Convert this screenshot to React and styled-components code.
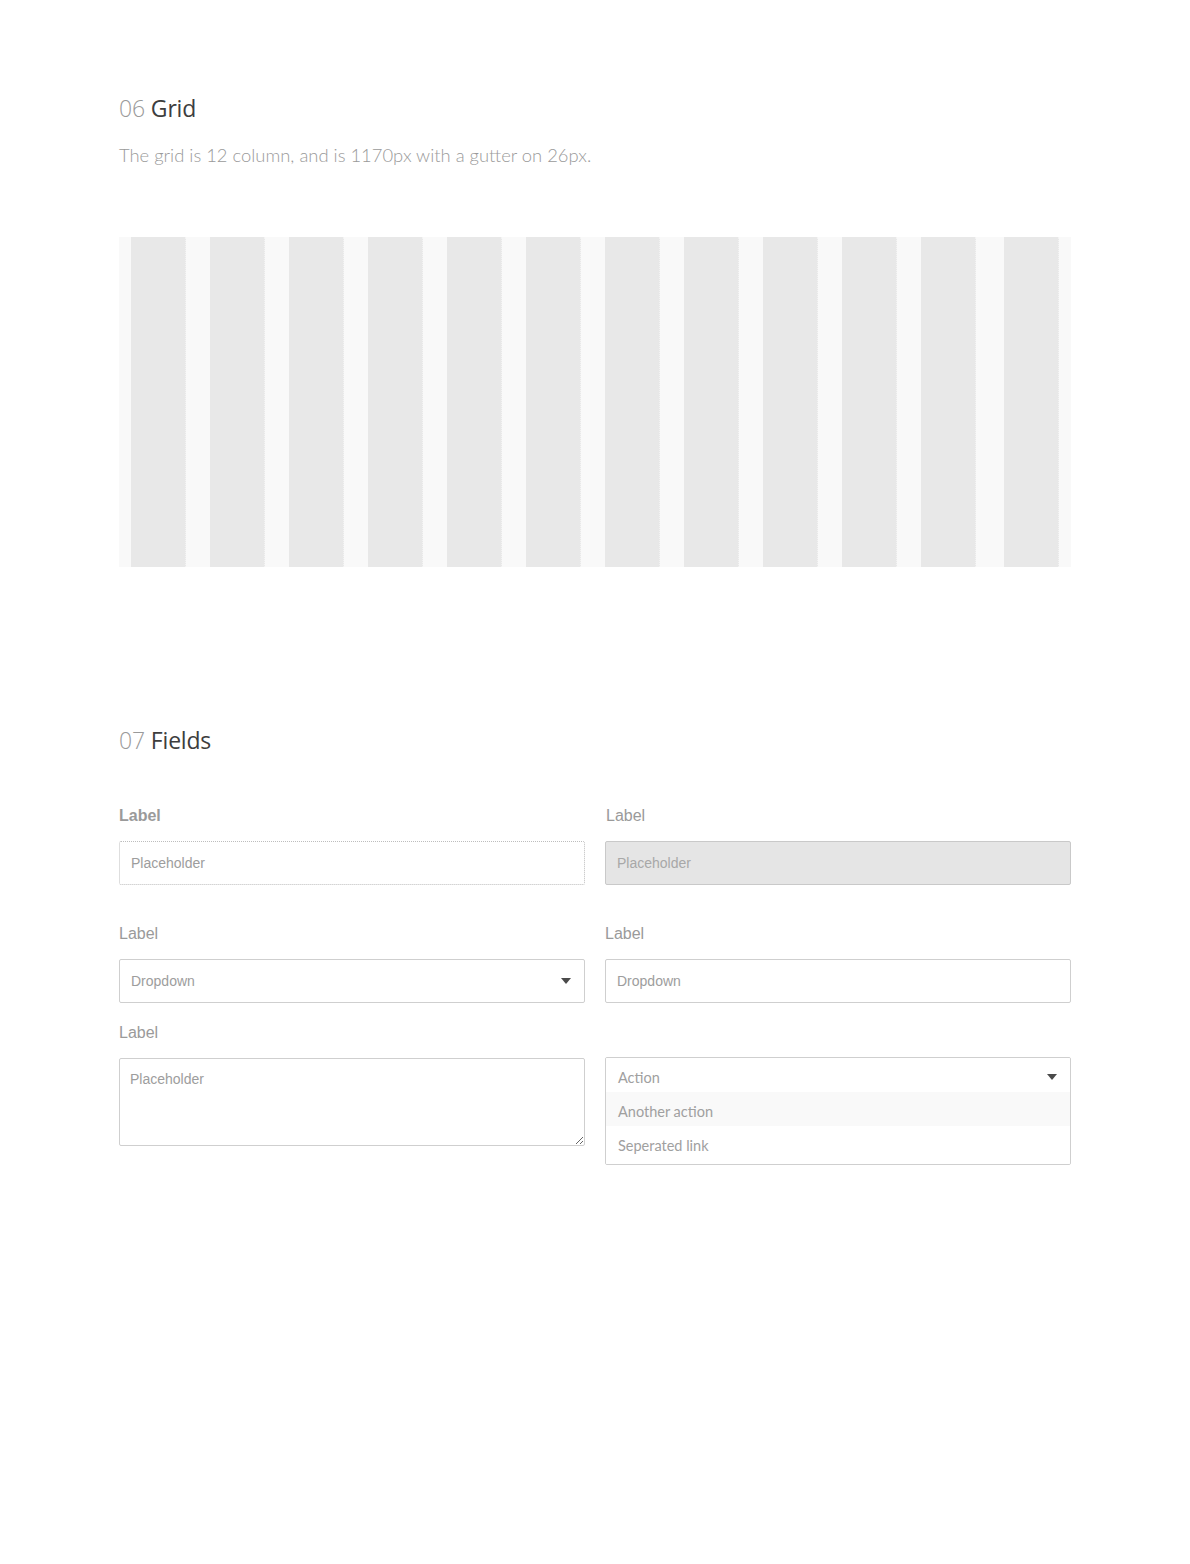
import React from "react";
import styled, { createGlobalStyle } from "styled-components";

const Global = createGlobalStyle`
  html, body { margin: 0; padding: 0; background: #fff; }
  body { font-family: "Liberation Sans", Arial, sans-serif; }
  * { box-sizing: border-box; }
`;

const Page = styled.div`
  width: 952px;
  margin-left: 119px;
  padding-top: 94px;
  padding-bottom: 300px;
`;

const Section = styled.section`
  margin-top: ${(p) => p.$top || 0}px;
`;

const Heading = styled.h2`
  margin: 0;
  font-family: "Open Sans", Lato, sans-serif;
  font-weight: 400;
  font-size: 23px;
  line-height: 28px;
  color: #3d3d3d;
  letter-spacing: -0.2px;
`;

const Num = styled.span`
  color: #9a9a9a;
  font-weight: 300;
  margin-right: 6px;
`;

const Lead = styled.p`
  margin: 20px 0 0;
  font-family: Lato, sans-serif;
  font-weight: 300;
  font-size: 18.4px;
  line-height: 26px;
  color: #9a9a9a;
`;

const GridDemo = styled.div`
  margin-top: 69px;
  height: 330px;
  background: #f9f9f9;
  padding: 0 12px;
  display: flex;
  gap: 24px;
`;

const Col = styled.div`
  flex: 0 0 55px;
  background: #e8e8e8;
  border-right: 1px dotted #f3f3f3;
  &:last-child { margin-left: auto; }
`;

const FieldGrid = styled.div`
  margin-top: 51px;
  display: grid;
  grid-template-columns: 466px 466px;
  column-gap: 20px;
`;

const Field = styled.div`
  display: flex;
  flex-direction: column;
  margin-top: ${(p) => p.$top || 0}px;
`;

const Label = styled.label`
  display: block;
  height: 20px;
  line-height: 21px;
  font-size: 16px;
  font-weight: ${(p) => (p.$bold ? 700 : 400)};
  color: #9a9a9a;
  margin-bottom: 16px;
  padding-left: ${(p) => (p.$shift ? 1 : 0)}px;
  visibility: ${(p) => (p.$hidden ? "hidden" : "visible")};
`;

const Input = styled.input`
  display: block;
  width: 100%;
  height: 44px;
  padding: 0 11px;
  font-family: "Liberation Sans", Arial, sans-serif;
  font-size: 14px;
  color: #666;
  background: #fff;
  border: 1px ${(p) => (p.$dotted ? "dotted #bdbdbd" : "solid #cfcfcf")};
  border-radius: 2px;
  outline: none;
  &::placeholder { color: #9d9d9d; }
  &:disabled {
    background-color: #ececec;
    background-image: radial-gradient(#dcdcdc 0.6px, transparent 0.8px);
    background-size: 2px 2px;
    border-color: #c9c9c9;
  }
  &:disabled::placeholder { color: #a8a8a8; }
`;

const SelectBox = styled.div`
  height: 44px;
  border: 1px solid #cfcfcf;
  border-radius: 2px;
  display: flex;
  align-items: center;
  justify-content: space-between;
  padding: 0 13px 0 11px;
  font-size: 14px;
  color: #9d9d9d;
`;

const Caret = styled.span`
  width: 0;
  height: 0;
  border-left: 5px solid transparent;
  border-right: 5px solid transparent;
  border-top: 6px solid #4a4a4a;
`;

const TextArea = styled.textarea`
  display: block;
  width: 100%;
  height: 88px;
  padding: 12px 10px;
  font-family: "Liberation Sans", Arial, sans-serif;
  font-size: 14px;
  border: 1px solid #cfcfcf;
  border-radius: 2px;
  resize: vertical;
  outline: none;
  &::placeholder { color: #9d9d9d; }
`;

const Menu = styled.div`
  margin-top: -1px;
  border: 1px solid #cfcfcf;
  border-radius: 2px;
  background: #fff;
  overflow: hidden;
`;

const MenuItem = styled.div`
  height: ${(p) => p.$h || 34}px;
  display: flex;
  align-items: center;
  justify-content: space-between;
  padding: 4px 13px 0 12px;
  padding-bottom: ${(p) => (p.$last ? 4 : 0)}px;
  font-family: Lato, sans-serif;
  font-size: 14.5px;
  color: #a0a0a0;
  background: ${(p) => (p.$active ? "#f9f9f9" : "#fff")};
`;

export default function App() {
  return (
    <>
      <Global />
      <Page>
        <Section>
          <Heading>
            <Num>06</Num>Grid
          </Heading>
          <Lead>The grid is 12 column, and is 1170px with a gutter on 26px.</Lead>
          <GridDemo>
            {Array.from({ length: 12 }).map((_, i) => (
              <Col key={i} />
            ))}
          </GridDemo>
        </Section>

        <Section $top={159}>
          <Heading>
            <Num>07</Num>Fields
          </Heading>
          <FieldGrid>
            <Field>
              <Label $bold>Label</Label>
              <Input $dotted placeholder="Placeholder" />
            </Field>
            <Field>
              <Label $shift>Label</Label>
              <Input disabled placeholder="Placeholder" />
            </Field>

            <Field $top={38}>
              <Label>Label</Label>
              <SelectBox>
                Dropdown
                <Caret />
              </SelectBox>
            </Field>
            <Field $top={38}>
              <Label>Label</Label>
              <Input placeholder="Dropdown" />
            </Field>

            <Field $top={19}>
              <Label>Label</Label>
              <TextArea placeholder="Placeholder" />
            </Field>
            <Field $top={19}>
              <Label $hidden>Label</Label>
              <Menu>
                <MenuItem>
                  Action
                  <Caret />
                </MenuItem>
                <MenuItem $active>Another action</MenuItem>
                <MenuItem $h={38} $last>Seperated link</MenuItem>
              </Menu>
            </Field>
          </FieldGrid>
        </Section>
      </Page>
    </>
  );
}
